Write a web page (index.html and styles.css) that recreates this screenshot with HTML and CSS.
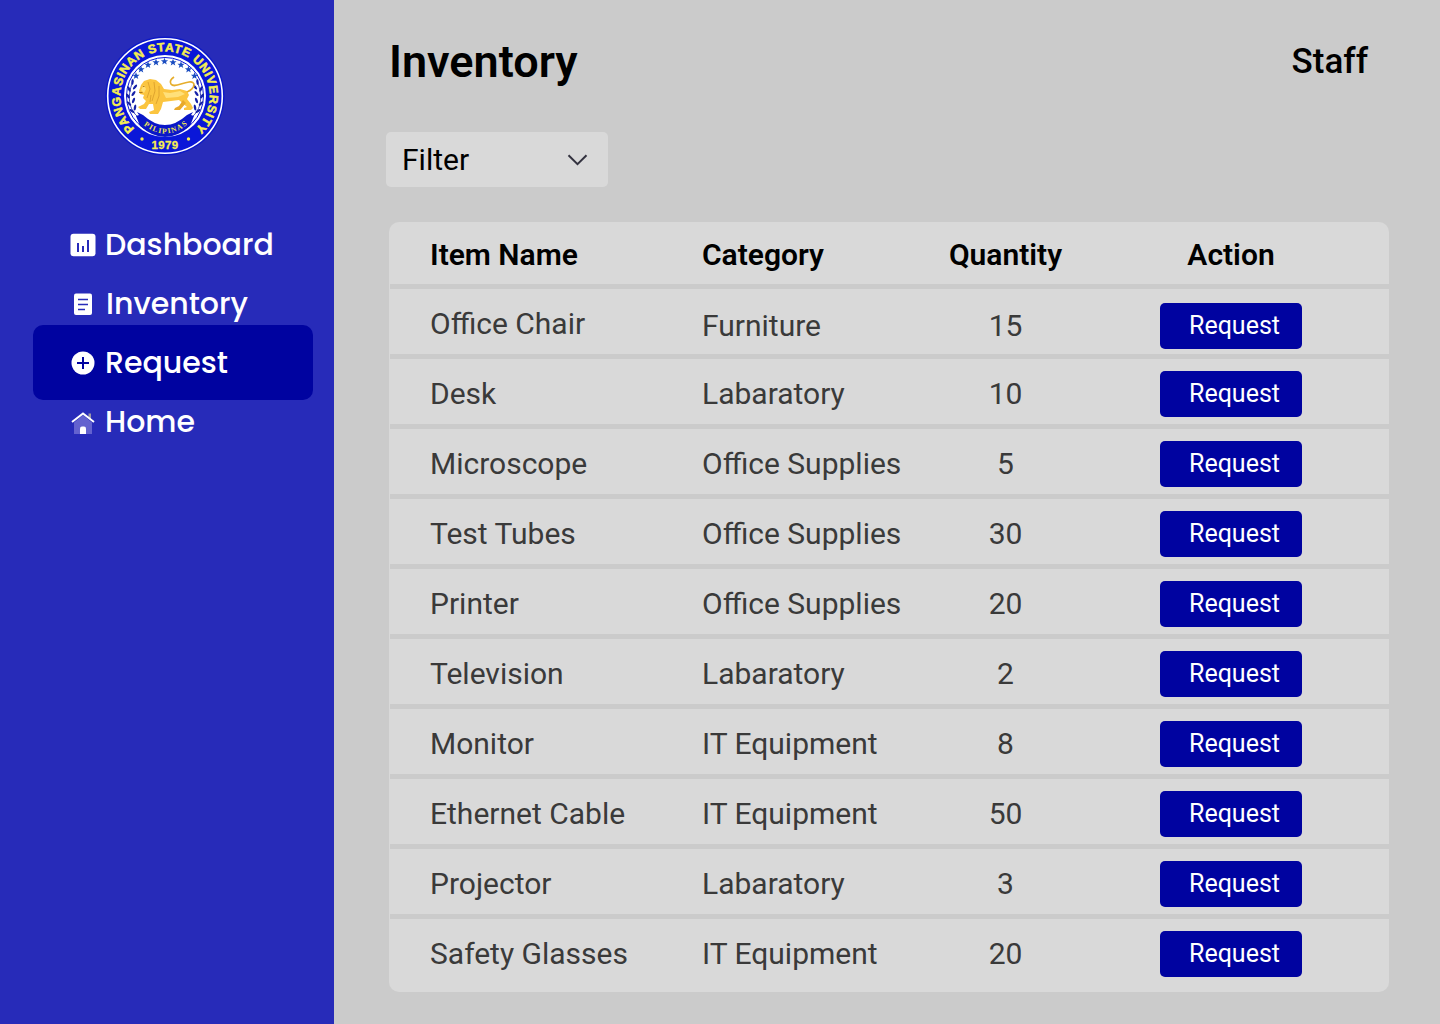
FILE: index.html
```html
<!DOCTYPE html>
<html lang="en">
<head>
<meta charset="utf-8">
<title>Inventory</title>
<link rel="stylesheet" href="styles.css">
</head>
<body>
<aside class="sidebar">
  <svg class="logo" viewBox="0 0 120 120" role="img" aria-label="Pangasinan State University">
    <defs>
      <path id="ring" d="M29.500 92.500 A44.600 44.600 0 1 1 90.500 92.500"/>
      <path id="ribbon" d="M37 88 Q60 107 83 88"/>
      <path id="star" d="M0-3.800 1-1.200 3.600-1.200 1.500.5 2.300 3.100 0 1.600-2.300 3.100-1.500.5-3.600-1.200-1-1.200Z"/>
      <g id="laurel">
        <path d="M37 84 C24 76 21 62 28 45" fill="none" stroke="#1420a8" stroke-width=".8"/>
        <g fill="#1420a8">
          <ellipse cx="27.500" cy="46" rx="1.200" ry="3" transform="rotate(5 27.500 46)"/>
          <ellipse cx="30" cy="51" rx="1.200" ry="3" transform="rotate(40 30 51)"/>
          <ellipse cx="24" cy="53" rx="1.200" ry="3" transform="rotate(-25 24 53)"/>
          <ellipse cx="28.500" cy="57.500" rx="1.200" ry="3" transform="rotate(35 28.500 57.500)"/>
          <ellipse cx="23" cy="60" rx="1.200" ry="3" transform="rotate(-35 23 60)"/>
          <ellipse cx="28.500" cy="64.500" rx="1.200" ry="3" transform="rotate(22 28.500 64.500)"/>
          <ellipse cx="24" cy="67.500" rx="1.200" ry="3" transform="rotate(-45 24 67.500)"/>
          <ellipse cx="30" cy="71.500" rx="1.200" ry="3" transform="rotate(10 30 71.500)"/>
          <ellipse cx="27" cy="75" rx="1.200" ry="3" transform="rotate(-55 27 75)"/>
        </g>
      </g>
    </defs>
    <circle cx="60" cy="60" r="59.500" fill="#0b18c8"/>
    <circle cx="60" cy="60" r="57.300" fill="#0a17d8" stroke="#fff" stroke-width="1.600"/>
    <circle cx="60" cy="60" r="41" fill="#fff"/>
    <circle cx="60" cy="60" r="38.500" fill="none" stroke="#0a17d8" stroke-width="1"/>
    <text class="logo-ring"><textPath href="#ring" textLength="213">PANGASINAN STATE UNIVERSITY</textPath></text>
    <text class="logo-year" x="60" y="112.500">1979</text>
    <circle cx="37" cy="103" r="1.700" fill="#f6ee50"/>
    <circle cx="83.500" cy="103" r="1.700" fill="#f6ee50"/>
    <g fill="#1a4cc0">
      <use href="#star" x="31" y="40"/><use href="#star" x="36" y="33.500"/><use href="#star" x="43" y="29"/>
      <use href="#star" x="51" y="26.500"/><use href="#star" x="59.500" y="25.500"/><use href="#star" x="68" y="26.500"/>
      <use href="#star" x="76" y="29"/><use href="#star" x="83.500" y="33.500"/><use href="#star" x="89.500" y="40"/>
    </g>
    <use href="#laurel"/>
    <use href="#laurel" transform="translate(120 0) scale(-1 1)"/>
    <path d="M31 80 L34 79 L32 76 L38 79 Q60 99 82 79 L88 76 L86 79 L89 80 L85 90 Q60 112 35 90Z" fill="#0a17c8"/>
    <text class="logo-ribbon"><textPath href="#ribbon" textLength="48" startOffset="2">PILIPINAS</textPath></text>
    <path d="M34 55 L36 49 L39 45 L45 43 L51 44 L56 48 L59 53 L67 54 L75 53 L82 55 L84 59 L82 63 L86 68 L88 72 L86 74 L79 74 L79 72 L82 71 L74 64 L66 65 L58 66 L56 73 L53 78 L45 78 L44 76 L49 74 L48 68 L44 68 L41 73 L35 73 L33 71 L39 68 L41 65 L38 62 L39 59 L35 58Z" fill="#fbc540"/>
    <path d="M78 64 L74 70 L70 72 L69 74 L75 74 L81 67Z" fill="#e8a92a"/>
    <path d="M82 56 C91 52 91 45 84 46 C76 47 69 52 66 48 C64 45 66 43 69 41" fill="none" stroke="#e6ad2c" stroke-width="1.700"/>
    <path d="M36 54 L39 49 L41 53 L39 57Z M58 56 L65 57 L75 55 L80 58 L73 61 L61 62Z" fill="#ffe07a"/>
    <path d="M43 46 L45 53 L42 62 M49 46 L50 55 L47 65 M54 50 L54 60 L51 68 M46 59 L45 66" fill="none" stroke="#dba02c" stroke-width=".9"/>
    <path d="M34 56.500h3.500M38 50.500h1.500" stroke="#9c6511" stroke-width=".8"/>
  </svg>
  <nav class="nav">
    <a class="nav-item">
      <svg class="icon" viewBox="0 0 26 26"><rect x=".5" y="1.800" width="25" height="22.400" rx="3" fill="#fff"/><path d="M8 11v9M13 14v6M18 8v12" stroke="#272bb9" stroke-width="2"/></svg>
      <span>Dashboard</span></a>
    <a class="nav-item inventory">
      <svg class="icon" viewBox="0 0 26 26"><rect x="4" y="2.500" width="18" height="21.500" rx="2" fill="#fff"/><path d="M8 8.500h10M8 13.500h10M8 18.500h7" stroke="#272bb9" stroke-width="1.700"/></svg>
      <span>Inventory</span></a>
    <a class="nav-item active">
      <svg class="icon" viewBox="0 0 26 26"><circle cx="13" cy="13" r="11.500" fill="#fff"/><path d="M7 13h12M13 7v12" stroke="#0003a0" stroke-width="2"/></svg>
      <span>Request</span></a>
    <a class="nav-item home">
      <svg class="icon" viewBox="0 0 26 26"><path d="M18.500 3.500h2.500v6l-2.500-2.500z" fill="#9a97a8"/><path d="M4 12.500L13 5l9 7.500V24H4z" fill="#6362cf"/><path d="M2 12L13 3.500l11 8.500" fill="none" stroke="#fff" stroke-width="2"/><path d="M10 24v-5.500a2 2 0 0 1 2-2h2a2 2 0 0 1 2 2V24z" fill="#fff"/></svg>
      <span>Home</span></a>
  </nav>
</aside>
<main class="main">
  <header class="header"><h1>Inventory</h1><span class="role">Staff</span></header>
  <button class="filter"><span>Filter</span>
    <svg viewBox="0 0 20 12"><path d="M1.500 1.200L10.500 10.200L19.500 1.200" fill="none" stroke="#33323f" stroke-width="2"/></svg>
  </button>
  <section class="table">
    <div class="row head"><span>Item Name</span><span>Category</span><span class="qty">Quantity</span><span class="action">Action</span></div>
    <div class="row first"><span class="item">Office Chair</span><span>Furniture</span><span class="qty">15</span><button class="btn">Request</button></div>
    <div class="row"><span>Desk</span><span>Labaratory</span><span class="qty">10</span><button class="btn">Request</button></div>
    <div class="row"><span>Microscope</span><span>Office Supplies</span><span class="qty">5</span><button class="btn">Request</button></div>
    <div class="row"><span>Test Tubes</span><span>Office Supplies</span><span class="qty">30</span><button class="btn">Request</button></div>
    <div class="row"><span>Printer</span><span>Office Supplies</span><span class="qty">20</span><button class="btn">Request</button></div>
    <div class="row"><span>Television</span><span>Labaratory</span><span class="qty">2</span><button class="btn">Request</button></div>
    <div class="row"><span>Monitor</span><span>IT Equipment</span><span class="qty">8</span><button class="btn">Request</button></div>
    <div class="row"><span>Ethernet Cable</span><span>IT Equipment</span><span class="qty">50</span><button class="btn">Request</button></div>
    <div class="row"><span>Projector</span><span>Labaratory</span><span class="qty">3</span><button class="btn">Request</button></div>
    <div class="row"><span>Safety Glasses</span><span>IT Equipment</span><span class="qty">20</span><button class="btn">Request</button></div>
  </section>
</main>
</body>
</html>
```
FILE: styles.css
```css
* { box-sizing: border-box; }
body {
  margin: 0;
  display: flex;
  width: 1440px;
  height: 1024px;
  overflow: hidden;
  background: #cbcbcb;
  font-family: Roboto, sans-serif;
  color: #000;
}
.sidebar {
  width: 334px;
  height: 1024px;
  padding-top: 36px;
  background: #272bb9;
}
.logo { display: block; width: 120px; height: 120px; margin-left: 105px; }
.logo-ring { font: 700 12.2px "Liberation Sans", sans-serif; fill: #f6ee50; stroke: #f6ee50; stroke-width: .5px; }
.logo-year { font: 700 11.5px "Liberation Sans", sans-serif; fill: #f6ee50; stroke: #f6ee50; stroke-width: .3px; text-anchor: middle; letter-spacing: .3px; }
.logo-ribbon { font: 700 7.5px "Liberation Serif", serif; fill: #f6ee50; }
.nav { display: flex; flex-direction: column; padding: 59px 21px 0 33px; }
.nav-item {
  display: flex;
  align-items: center;
  height: 59px;
  padding-left: 37px;
  gap: 9px;
  color: #fff;
  font: 500 30px/58px Poppins, sans-serif;
}
.inventory { gap: 10px; }
.home span { padding-bottom: 2px; }
.icon { width: 26px; height: 26px; flex: none; }
.active { height: 75px; margin: -8px 0 -7px; border-radius: 10px; background: #0003a0; }
.main { flex: 1; padding: 0 51px 0 55px; }
.header {
  display: flex;
  justify-content: space-between;
  align-items: center;
  height: 124px;
  padding-right: 21px;
}
h1 { margin: 0; font-size: 45px; font-weight: 600; line-height: 124px; }
.role { padding-bottom: 2px; font-size: 35px; font-weight: 500; }
.filter {
  display: flex;
  align-items: center;
  justify-content: space-between;
  width: 222px;
  height: 55px;
  margin: 8px 0 0 -3px;
  padding: 0 21px 0 16px;
  border: 0;
  border-radius: 5px;
  background: #d9d9d9;
  font: 400 30px Roboto, sans-serif;
  color: #000;
}
.filter svg { width: 20px; height: 12px; overflow: visible; }
.table {
  width: 1000px;
  height: 770px;
  margin-top: 35px;
  padding-left: 1px;
  border-radius: 10px;
  background: #d9d9d9;
}
.row {
  display: grid;
  grid-template-columns: 272px 200px 258px 142px;
  align-items: center;
  height: 70px;
  padding: 4px 0 0 40px;
  border-bottom: 5px solid #cbcbcb;
  color: #3a3a3a;
  font-size: 30px;
  line-height: 46px;
}
.row:last-child { border-bottom-color: transparent; }
.head { height: 67px; color: #000; font-weight: 600; }
.first { padding-top: 8px; }
.first .item { padding-bottom: 4px; }
.qty { width: 207px; text-align: center; }
.action { text-align: center; }
.btn {
  width: 142px;
  height: 46px;
  padding: 0 0 0 7px;
  border: 0;
  border-radius: 5px;
  background: #0003a0;
  color: #fff;
  font: 400 25px/46px Roboto, sans-serif;
}
```
